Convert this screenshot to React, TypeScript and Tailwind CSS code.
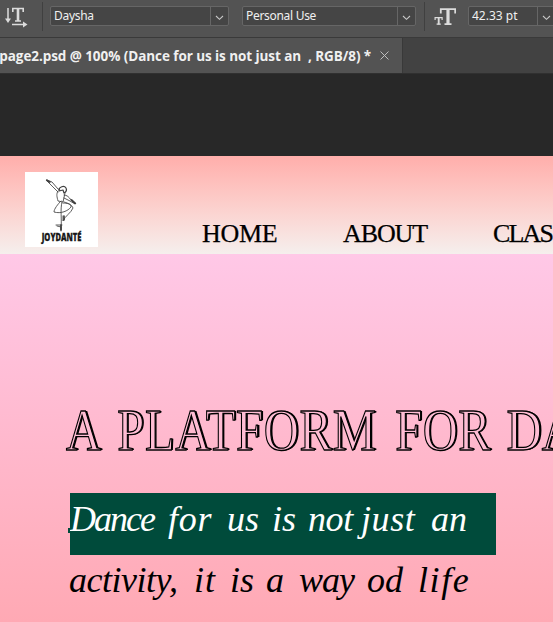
import React from "react";

function Select({ value, className }: { value: string; className: string }) {
  return (
    <div className={`flex h-5 shrink-0 rounded-[2px] border border-[#666666] bg-[#454545] ${className}`}>
      <span className="flex-1 overflow-hidden pl-[3px] font-['Noto_Sans',sans-serif] text-[12px] leading-[18px] tracking-[-0.3px] whitespace-nowrap text-[#f0f0f0]">
        {value}
      </span>
      <span className="flex w-[18px] shrink-0 items-center justify-center border-l border-[#666666]">
        <svg width="9" height="6" viewBox="0 0 9 6" fill="none" stroke="#c8c8c8" strokeWidth="1.1" className="mt-1">
          <path d="M1 1l3.5 3.3L8 1" />
        </svg>
      </span>
    </div>
  );
}

function OrientationIcon() {
  return (
    <svg width="24" height="22" viewBox="0 0 24 22" fill="none" stroke="#dcdcdc" className="shrink-0">
      <path d="M4 2v13" strokeWidth="1.5" />
      <path d="M1 12.5h6l-3 4.5z" fill="#dcdcdc" stroke="none" />
      <path d="M8.8 6V2.5h10.4V6M11 15h6" strokeWidth="1.6" />
      <path d="M14 2v13" strokeWidth="2.6" />
      <path d="M8 18.5h12" strokeWidth="1.5" />
      <path d="M19 15.5v6l4.5-3z" fill="#dcdcdc" stroke="none" />
    </svg>
  );
}

function FontSizeIcon() {
  return (
    <svg width="22" height="19" viewBox="0 0 22 19" fill="none" stroke="#dcdcdc" className="shrink-0">
      <path d="M6.8 5.5V1.2h14.4v4.3M10.5 16.2h7" strokeWidth="1.8" />
      <path d="M14 1v15.5" strokeWidth="3.2" />
      <path d="M1.1 12V9.6h7V12M2.6 16.2h4.2" strokeWidth="1.2" />
      <path d="M4.7 10v6.5" strokeWidth="1.9" />
    </svg>
  );
}

function Dancer() {
  return (
    <svg width="36" height="55" viewBox="0 0 36 55" fill="none" stroke="#404040" strokeWidth="0.85" strokeLinecap="round" strokeLinejoin="round">
      <path d="M3 2l5 2 6 7 2 1M3 3l5 5 5 5 1 1" />
      <path d="M2.8 2.2l3 1.8" strokeWidth="1.8" />
      <path d="M15 12c0-3 5-5 7-2 1 2 0 4-2 5l-1-3-4 1" strokeWidth="1.2" />
      <path d="M14 13c-2 3-1 6 0 10l5 1 2-9M20 17c3 0 5 2 7 5l4 4-5-3-6-3" />
      <path d="M27.5 22l3.8 3.4" strokeWidth="1.8" />
      <path d="M17 23c-3 3-7 8-7 11 7 2 14-1 17-5 1-3-4-4-8-4M20 24c4 1 8 3 9 6-2 5-8 8-10 13v-5M18 24c-2 8 0 16-1 28" />
      <path d="M12 47h6M13 48l4 1v4" />
      <path d="M20 38v4M17 47v5" strokeWidth="1.6" />
    </svg>
  );
}

const firstLine = [
  ["Dance", "w-[98px] tracking-[-2px]"],
  ["for", "w-[59px] tracking-[0.8px]"],
  ["us", "w-[45px]"],
  ["is", "w-[36px]"],
  ["not", "w-[53px] tracking-[-0.4px]"],
  ["just", "w-[70px] tracking-[0.6px]"],
  ["an", "w-[40px]"],
];

const secondLine = [
  ["activity,", "w-[125px] tracking-[-0.5px]"],
  ["it", "w-[36px] tracking-[1px]"],
  ["is", "w-[36px]"],
  ["a", "w-[33px]"],
  ["way", "w-[68px] tracking-[-1px]"],
  ["od", "w-[51px]"],
  ["life", "w-[56px] tracking-[1.6px]"],
];

function ScriptLine({ words, className }: { words: string[][]; className: string }) {
  return (
    <div className={`flex font-['Liberation_Serif',serif] text-[36px] italic whitespace-nowrap ${className}`}>
      {words.map(([word, style], i) => (
        <span key={i} className={`shrink-0 ${style}`}>
          {word}
        </span>
      ))}
    </div>
  );
}

export default function App() {
  return (
    <div className="flex h-[622px] w-[553px] flex-col overflow-hidden bg-[#282828]">
      <div className="flex h-[38px] shrink-0 items-start overflow-hidden border-b border-[#3a3a3a] bg-[#535353] pt-1.5 pl-1">
        <OrientationIcon />
        <div className="-mt-1 ml-3.5 h-[29px] w-px shrink-0 bg-[#404040]" />
        <Select value="Daysha" className="ml-[7px] w-[179px]" />
        <Select value="Personal Use" className="ml-[13px] w-[174px]" />
        <div className="-mt-1 ml-2 h-[29px] w-px shrink-0 bg-[#404040]" />
        <div className="mt-0.5 ml-[9px]">
          <FontSizeIcon />
        </div>
        <Select value="42.33 pt" className="ml-3 w-[88px] [&>span:first-child]:tracking-normal" />
      </div>

      <div className="flex h-[36px] shrink-0 border-b border-[#303030] bg-[#424242]">
        <div className="flex w-[403px] shrink-0 items-center overflow-hidden border-r border-[#393939] bg-[#535353]">
          <span className="-ml-[5px] w-[376px] shrink-0 pt-px font-['Open_Sans',sans-serif] text-[13.5px] font-bold tracking-[-0.07px] whitespace-pre text-[#f0f0f0]">
            {"-page2.psd @ 100% (Dance for us is not just an  , RGB/8) *"}
          </span>
          <svg width="9" height="9" viewBox="0 0 9 9" stroke="#bdbdbd" strokeWidth="1" className="ml-[9px] shrink-0">
            <path d="M.5.5l8 8M8.5.5l-8 8" />
          </svg>
        </div>
      </div>

      <div className="mt-[82px] flex h-[98px] shrink-0 bg-linear-to-b from-[#ffaeab] to-[#f5efed] pt-4 pl-[25px]">
        <div className="flex h-[75px] w-[73px] shrink-0 flex-col items-center bg-white pt-[6px]">
          <Dancer />
          <span className="-mt-[2px] ml-[1px] scale-x-[0.72] font-['Open_Sans',sans-serif] text-[10.5px] leading-3 font-extrabold text-[#181818] [-webkit-text-stroke:0.3px_#181818]">
            JOYDANTÉ
          </span>
        </div>
        <nav className="ml-[104px] flex pt-[47px] font-['Liberation_Serif',serif] text-[26px] leading-[30px] whitespace-nowrap text-black [-webkit-text-stroke:0.25px_black]">
          <span className="w-[141px] shrink-0 tracking-[-0.3px]">HOME</span>
          <span className="w-[150px] shrink-0 tracking-[-1.1px]">ABOUT</span>
          <span className="tracking-[-1.8px]">CLAS</span>
        </nav>
      </div>

      <main className="flex flex-1 flex-col items-start bg-linear-to-b from-[#ffc8e7] to-[#ffa9b4]">
        <h1 className="mt-[143px] ml-[66px] flex h-[67px] origin-left scale-x-[0.825] font-['Liberation_Serif',serif] text-[59px] leading-[66px] whitespace-nowrap text-[#ffbdd4] [-webkit-text-stroke:1.3px_black] [text-shadow:1px_0_black,2px_0_black]">
          <span className="w-[62px] shrink-0">A</span>
          <span className="w-[337px] shrink-0 tracking-[0.8px]">PLATFORM</span>
          <span className="w-[135px] shrink-0 tracking-[0.5px]">FOR</span>
          <span>DANCE</span>
        </h1>
        <div className="mt-[29px] ml-[70px] h-[62px] w-[426px] bg-[#004b3b]">
          <div className="relative top-[35px] -left-0.5 h-[5px] w-0.5 bg-[#004b3b]" />
          <ScriptLine words={firstLine} className="-mt-[5px] h-[62px] leading-[52px] text-white" />
        </div>
        <ScriptLine words={secondLine} className="ml-[69px] h-[62px] leading-[50px] text-black" />
      </main>
    </div>
  );
}
